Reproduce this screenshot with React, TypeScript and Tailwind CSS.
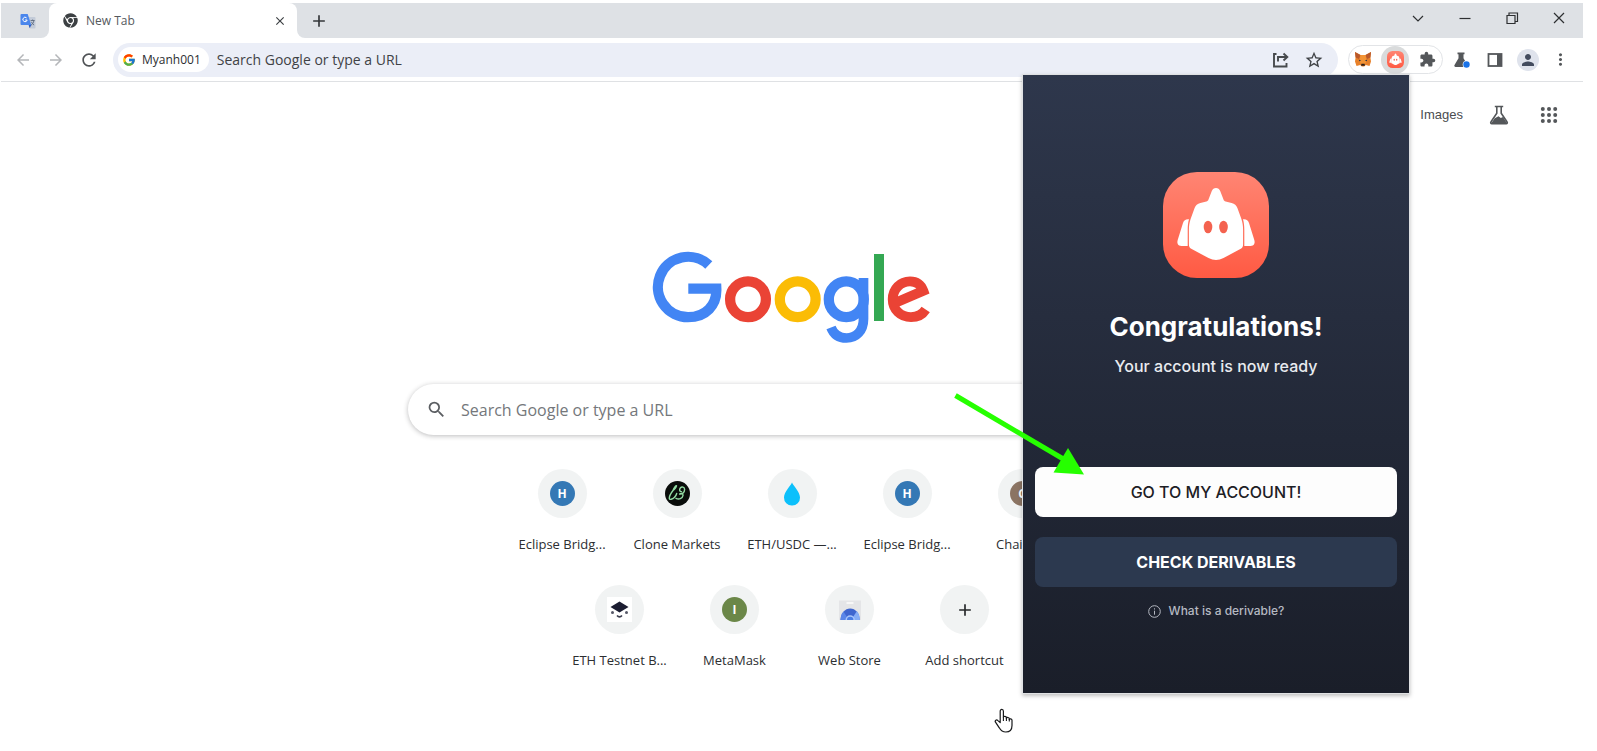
import type { ReactNode } from "react";
import {
  MdArrowBack,
  MdArrowForward,
  MdRefresh,
  MdExtension,
  MdPerson,
  MdMoreVert,
  MdSearch,
  MdStarBorder,
  MdAdd,
  MdClose,
} from "react-icons/md";
import { FcGoogle } from "react-icons/fc";
import { FaChrome } from "react-icons/fa";

function TranslateIcon() {
  return (
    <svg viewBox="0 0 16 16" className="size-4" aria-hidden="true">
      <path d="M7 4h7.500a1 1 0 0 1 1 1v9.500a1 1 0 0 1-1 1H10z" fill="#c3cbd8" />
      <path d="M1.500 1h6.200l3.600 11H1.500a1 1 0 0 1-1-1V2a1 1 0 0 1 1-1z" fill="#4a86ec" />
      <path d="M8.600 12h2.700l-1.600 3.200z" fill="#2f5fc4" />
      <path d="M6.600 4.900A2.200 2.200 0 1 0 7.200 7H5.200" fill="none" stroke="#fff" strokeWidth="1" />
      <path d="M10.600 7.500h4M12.600 6.500v1M11 12.200c1.500-1 2.600-2.600 2.900-4.700M11.400 8.800c.6 1.500 1.500 2.500 2.700 3.300" fill="none" stroke="#5d6b80" strokeWidth="0.9" />
    </svg>
  );
}

function ShareIcon() {
  return (
    <svg viewBox="0 0 18 18" className="size-[18px]" fill="none" stroke="#474a4d" strokeWidth="1.900" aria-hidden="true">
      <path d="M4.500 3H2v12.500h12.500V12" />
      <path d="M6 10.500V6h8.500" />
      <path d="M11.500 2.500L15.300 6l-3.800 3.500" />
    </svg>
  );
}

function FoxIcon() {
  return (
    <svg viewBox="0 0 18 17" className="h-[17px] w-[18px]" aria-hidden="true">
      <path d="M1 1l5.500 3h5L17 1l-.6 5.500.6 4-1.500 4.500-3.700-1-1.600 1.500H7.800L6.200 14l-3.700 1L1 10.500l.6-4z" fill="#e8812a" />
      <path d="M1 1l5.500 3L5 8 1.600 6.500zM17 1l-5.500 3L13 8l3.400-1.500z" fill="#b9582a" />
      <path d="M6.500 4h5l1 6-1.500 3H7l-1.500-3z" fill="#f39435" />
      <path d="M4.800 8.500l2.400 1.200-2 .6zM13.200 8.500l-2.400 1.200 2 .6z" fill="#2b3a4a" />
      <path d="M7.400 12.800h3.200l.3 1.900H7.100z" fill="#2c1f1a" />
    </svg>
  );
}

function MascotIcon({ className, id }: { className: string; id: string }) {
  return (
    <svg viewBox="0 0 106 106" className={className} aria-hidden="true">
      <defs>
        <linearGradient id={id} x1="0" y1="0" x2="0" y2="1">
          <stop offset="0" stopColor="#ff8573" />
          <stop offset="1" stopColor="#ff5a43" />
        </linearGradient>
      </defs>
      <rect width="106" height="106" rx="34" fill={`url(#${id})`} />
      <path
        d="M53 16c2 0 3.400 1.200 4.200 3l3.400 8.800c.4 1 1 1.400 2 1.600l6 1.600c3 .8 4.800 2.400 5.800 5l4 11c1.200 3.600 1.700 7 1.700 11v14.500c0 2.200-.8 3.400-2.800 4.600L60.500 86c-5 2.500-10 2.500-15 0L28.700 77.100c-2-1.200-2.800-2.400-2.800-4.600V58c0-4 .5-7.400 1.700-11l4-11c1-2.600 2.800-4.200 5.800-5l6-1.600c1-.2 1.600-.6 2-1.600L48.800 19c.8-1.800 2.200-3 4.200-3z"
        fill="#fff"
      />
      <path d="M26 47.300c-3.300-.3-5 .8-6 3.800l-5.300 17c-1 3.500.3 5.800 3.700 5.800h6.300V58c0-4 .3-7.300 1.300-10.700z" fill="#fff" />
      <path d="M80 47.300c3.300-.3 5 .8 6 3.800l5.300 17c1 3.500-.3 5.800-3.700 5.800h-6.300V58c0-4-.3-7.300-1.300-10.700z" fill="#fff" />
      <ellipse cx="45" cy="55" rx="4.300" ry="6.300" fill="#f4624f" />
      <ellipse cx="60.500" cy="55" rx="4.300" ry="6.300" fill="#f4624f" />
    </svg>
  );
}

function LabsIcon({ className }: { className: string }) {
  return (
    <svg viewBox="0 0 20 20" className={className} aria-hidden="true">
      <path d="M5.800 1.500h8.400M7.800 2v6.200L1.900 17a1 1 0 0 0 .8 1.600h14.600a1 1 0 0 0 .8-1.600l-5.900-8.800V2" fill="none" stroke="#54575a" strokeWidth="1.600" />
      <path d="M5.700 13.200l3.800-2 2.300 1.800 2.200-.9 4 6.100H2.200z" fill="#54575a" />
    </svg>
  );
}

function ExperimentsIcon() {
  return (
    <svg viewBox="0 0 18 18" className="size-[18px]" aria-hidden="true">
      <path d="M4.500 1.500h7v1.700h-1v4l4 6.800a1.300 1.300 0 0 1-1.100 2H2.600a1.300 1.300 0 0 1-1.100-2l4-6.800v-4h-1z" fill="#54575a" />
      <circle cx="13.500" cy="13.500" r="3.800" fill="#fff" />
      <circle cx="13.500" cy="13.500" r="3.200" fill="#1a73e8" />
    </svg>
  );
}

function SidePanelIcon() {
  return (
    <svg viewBox="0 0 16 16" className="size-4" aria-hidden="true">
      <rect x="1.500" y="2" width="13" height="12" fill="none" stroke="#54575a" strokeWidth="1.800" />
      <rect x="10" y="2" width="4.500" height="12" fill="#54575a" />
    </svg>
  );
}

function AppsIcon() {
  return (
    <svg viewBox="0 0 18 18" className="size-[18px]" fill="#54575a" aria-hidden="true">
      {[3, 9, 15].map((y) => [2.8, 9, 15.2].map((x) => <circle key={`${x}-${y}`} cx={x} cy={y} r="2" />))}
    </svg>
  );
}

function GoogleLogo() {
  return (
    <svg viewBox="11 11 282 93" className="h-[93px] w-[282px]" role="img" aria-label="Google" fill="none" strokeWidth="10.300">
      <path d="M68.800 25A30.200 30.200 0 1 0 48 77.200C66 77.200 77 65 76.300 48.700H48.300" stroke="#4285f4" />
      <circle cx="108" cy="59.300" r="17.900" stroke="#ea4335" />
      <circle cx="157.700" cy="59.300" r="17.900" stroke="#fbbc05" />
      <ellipse cx="206.300" cy="59.300" rx="17.500" ry="17.900" stroke="#4285f4" />
      <path d="M223.500 38V79C223.500 91 216 98 206.500 98C199 98 193.500 94 191 87.500" stroke="#4285f4" strokeWidth="9.700" />
      <path d="M239 14V81" stroke="#34a853" strokeWidth="10" />
      <path
        d="M285.700 69.500C282.500 74.500 277.500 77.200 271 77.200C260.500 77.200 252.700 69.500 252.700 59.300C252.700 49 260.500 41.400 270 41.400C276.500 41.400 281 44.600 283.300 50.800L255.500 62.800"
        stroke="#ea4335"
        strokeWidth="9.800"
      />
    </svg>
  );
}

function Letter({ color, children }: { color: string; children: string }) {
  return (
    <span className={`flex size-[25px] items-center justify-center rounded-full text-[12px] leading-none font-bold text-white ${color}`}>
      {children}
    </span>
  );
}

function CloneIcon() {
  return (
    <svg viewBox="0 0 25 25" className="size-[25px]" aria-hidden="true">
      <circle cx="12.500" cy="12.500" r="12.500" fill="#0a0d0b" />
      <path
        d="M8 9.500C6 12 4.200 15.500 4.300 17.700c.2 1.400 3.200.6 5-1.200 1.500-1.500 2.200-3 2.400-4M8 9.500c1.500-1 3.800-4 3.500-4.800-.5-.6-2.500 2-3.500 4.800M11 17.300c2.800 1.500 6.500.4 7-3 .2-2-2-2.300-3.400-1.300M14.600 13c2.600.6 5-1.800 5-4.600 0-2.600-2.800-3.200-4.300-1.400-1.300 1.600-.6 3.800 1.200 3.600"
        fill="none"
        stroke="#93dca4"
        strokeWidth="1.400"
        strokeLinecap="round"
      />
    </svg>
  );
}

function DropIcon() {
  return (
    <svg viewBox="0 0 18 24" className="h-6 w-[18px]" aria-hidden="true">
      <path d="M9 .500c1.500 3.500 8 9.500 8 15A7.800 7.800 0 0 1 9 23.500a7.800 7.800 0 0 1-8-8c0-5.500 6.500-11.500 8-15z" fill="#0cc0fb" />
    </svg>
  );
}

function TestnetIcon() {
  return (
    <svg viewBox="0 0 25 25" className="size-[25px]" aria-hidden="true">
      <rect width="25" height="25" fill="#fff" />
      <path d="M12.500 4.500l9 5.500-9 5.500-9-5.500z" fill="#1b1d31" />
      <circle cx="5.500" cy="15.500" r="1.500" fill="#555766" />
      <circle cx="19.500" cy="15.500" r="1.500" fill="#555766" />
      <path d="M10 18.500c1.500 1.800 3.500 1.800 5 0" fill="none" stroke="#3b3d4d" strokeWidth="1.600" />
    </svg>
  );
}

function WebStoreIcon() {
  return (
    <svg viewBox="0 0 24 24" className="size-6" aria-hidden="true">
      <path d="M1 2.500h22V22H1z" fill="#e4e5e7" />
      <path d="M8.500 4h7v2h-7z" fill="#f7f7f7" />
      <path d="M2.500 22a9.700 11.500 0 0 1 19.400 0z" fill="#3f66cf" />
      <path d="M2.500 22a9.700 11.500 0 0 1 3-8.500L9 19v3z" fill="#5a86e8" />
      <path d="M15 22v-3l3.800-5.700A9.700 11.500 0 0 1 21.900 22z" fill="#86adf6" />
      <path d="M7.500 22a4.700 4.700 0 0 1 9.400 0z" fill="#a9c6fb" />
      <path d="M9 22a3.200 3.200 0 0 1 6.400 0z" fill="#4a7de4" />
    </svg>
  );
}

function Tile({ label, children }: { label: string; children: ReactNode }) {
  return (
    <a href="#" className="flex h-[116px] w-[115px] flex-col items-center">
      <span className="flex size-[49px] items-center justify-center rounded-full bg-[#f1f3f3]">{children}</span>
      <span className="mt-[18px] text-[13px] leading-4 whitespace-nowrap text-[#2c2e31]">{label}</span>
    </a>
  );
}

function ToolButton({ label, children }: { label: string; children: ReactNode }) {
  return (
    <button aria-label={label} className="flex h-[29px] w-[33px] items-center justify-center text-[#54575a]">
      {children}
    </button>
  );
}

function TabStrip() {
  return (
    <div className="flex h-[35px] items-stretch bg-[#dee1e5]">
      <div className="bg-white">
        <button aria-label="Google Translate" className="flex h-full w-12 items-center justify-center rounded-br-lg bg-[#dee1e5] pl-1.5">
          <TranslateIcon />
        </button>
      </div>
      <div className="flex w-[248px] items-center rounded-t-lg bg-white pr-2.5 pl-3.5">
        <FaChrome className="size-[15px] text-[#3c4043]" />
        <span className="ml-2 flex-1 text-[12px] text-[#55595d]">New Tab</span>
        <button aria-label="Close tab">
          <MdClose className="size-[14px] text-[#3c4043]" />
        </button>
      </div>
      <div className="flex flex-1 bg-white">
        <div className="flex flex-1 items-center rounded-bl-lg bg-[#dee1e5] pl-3">
          <button aria-label="New tab">
            <MdAdd className="size-5 text-[#34373a]" />
          </button>
          <div className="ml-auto flex h-full pr-px pb-1.5">
            {[
              ["Search tabs", "M1 4l5 5 5-5"],
              ["Minimize", "M0.500 6.500h11"],
              ["Restore", "M1 3.500h8v8H1zM3 3V1h8.500v8.500H9.500"],
              ["Close", "M1 1l10 10M11 1L1 11"],
            ].map(([name, d]) => (
              <button key={name} aria-label={name} className="flex w-[47px] items-center justify-center">
                <svg viewBox="0 0 12 12" className="size-3 overflow-visible" fill="none" stroke="#2d2f31" strokeWidth="1.200">
                  <path d={d} />
                </svg>
              </button>
            ))}
          </div>
        </div>
      </div>
    </div>
  );
}

function Toolbar() {
  return (
    <div className="flex h-11 items-center border-b border-[#dfe1e4] pr-1.5 pl-[5px]">
      <button aria-label="Back" className="flex w-[33px] justify-center text-[#b4b6b9]">
        <MdArrowBack className="size-[18px]" />
      </button>
      <button aria-label="Forward" className="flex w-[33px] justify-center text-[#b4b6b9]">
        <MdArrowForward className="size-[18px]" />
      </button>
      <button aria-label="Reload" className="flex w-[33px] justify-center text-[#505356]">
        <MdRefresh className="size-5" />
      </button>
      <div className="ml-2 flex h-[34px] flex-1 items-center rounded-full bg-[#ebeef7] pl-[5px]">
        <div className="flex h-[25px] items-center gap-1.5 rounded-full bg-white pr-2 pl-1">
          <FcGoogle className="size-[14px]" />
          <span className="text-[12px] font-medium text-[#2c2e31]">Myanh001</span>
        </div>
        <input
          aria-label="Address and search bar"
          placeholder="Search Google or type a URL"
          className="ml-2 min-w-0 flex-1 bg-transparent text-[14px] outline-none placeholder:text-[#3f4246]"
        />
        <ToolButton label="Share">
          <ShareIcon />
        </ToolButton>
        <ToolButton label="Bookmark this tab">
          <MdStarBorder className="size-5 text-[#3f4246]" />
        </ToolButton>
        <div className="w-2" />
      </div>
      <div className="ml-2.5 flex h-[29px] items-center rounded-full border border-[#e2e4e7]">
        <button aria-label="MetaMask" className="flex w-7 justify-center">
          <FoxIcon />
        </button>
        <button aria-label="Wallet" className="ml-1 flex size-7 items-center justify-center rounded-full bg-[#d9dbdc]">
          <MascotIcon className="size-[17px]" id="mascot-small" />
        </button>
        <button aria-label="Extensions" className="flex w-[33px] justify-center pl-1">
          <MdExtension className="size-[17px] text-[#54575a]" />
        </button>
      </div>
      <div className="ml-0.5 flex">
        <ToolButton label="Experiments">
          <ExperimentsIcon />
        </ToolButton>
        <ToolButton label="Side panel">
          <SidePanelIcon />
        </ToolButton>
        <ToolButton label="Profile">
          <span className="flex size-[22px] items-center justify-center rounded-full bg-[#dfe3ec]">
            <MdPerson className="size-[18px] text-[#434c5e]" />
          </span>
        </ToolButton>
        <ToolButton label="Menu">
          <MdMoreVert className="size-[19px]" />
        </ToolButton>
      </div>
    </div>
  );
}

function NewTabPage() {
  return (
    <main className="flex flex-col items-center">
      <header className="flex h-[66px] w-full items-center justify-end pr-[25px]">
        <a href="#" className="font-['Liberation_Sans',sans-serif] text-[13px] text-[#4a4d50]">
          Images
        </a>
        <button aria-label="Labs" className="ml-[26px]">
          <LabsIcon className="size-5" />
        </button>
        <button aria-label="Google apps" className="ml-[31px]">
          <AppsIcon />
        </button>
      </header>
      <div className="mt-[103px]">
        <GoogleLogo />
      </div>
      <div className="mt-10 flex h-[51px] w-full max-w-[768px] items-center rounded-full bg-white pl-[18px] shadow-[0_1px_5px_rgba(32,33,36,0.3)]">
        <MdSearch className="size-[21px] text-[#5b5e62]" />
        <input
          aria-label="Search"
          placeholder="Search Google or type a URL"
          className="ml-3.5 min-w-0 flex-1 bg-transparent text-[16px] outline-none placeholder:text-[#74777b]"
        />
      </div>
      <nav aria-label="Shortcuts" className="mt-[34px] flex w-[575px] flex-wrap justify-center">
        <Tile label="Eclipse Bridg...">
          <Letter color="bg-[#3478b5]">H</Letter>
        </Tile>
        <Tile label="Clone Markets">
          <CloneIcon />
        </Tile>
        <Tile label="ETH/USDC —...">
          <DropIcon />
        </Tile>
        <Tile label="Eclipse Bridg...">
          <Letter color="bg-[#3478b5]">H</Letter>
        </Tile>
        <Tile label="Chainlist">
          <Letter color="bg-[#8b7463]">C</Letter>
        </Tile>
        <Tile label="ETH Testnet B...">
          <TestnetIcon />
        </Tile>
        <Tile label="MetaMask">
          <Letter color="bg-[#6b8748]">I</Letter>
        </Tile>
        <Tile label="Web Store">
          <WebStoreIcon />
        </Tile>
        <Tile label="Add shortcut">
          <MdAdd className="size-5 text-[#26282a]" />
        </Tile>
      </nav>
    </main>
  );
}

function WalletPopup() {
  return (
    <section className="absolute top-[74px] right-[187px] w-[388px] border border-[#dfe1e3] bg-linear-to-b from-[#2e374c] to-[#1a1e29] px-3 pt-[97px] pb-[72px] text-center font-['Inter',sans-serif] text-white shadow-[0_2px_4px_rgba(0,0,0,0.25)]">
      <MascotIcon className="mx-auto size-[106px]" id="mascot-large" />
      <h1 className="mt-[31px] text-[26px] leading-9 font-bold">Congratulations!</h1>
      <p className="mt-[9px] text-[16px] leading-6 font-medium text-[#e9ebf0]">Your account is now ready</p>
      <button className="mt-[89px] block h-[50px] w-full rounded-lg bg-[#fdfdfd] text-[16px] font-medium text-[#1d2025]">
        GO TO MY ACCOUNT!
      </button>
      <button className="mt-5 block h-[50px] w-full rounded-lg bg-[#2c394f] text-[16px] font-bold text-white">
        CHECK DERIVABLES
      </button>
      <a href="#" className="mt-3.5 flex items-center justify-center gap-2 text-[12px] leading-5 font-medium text-[#b5b9c2]">
        <svg viewBox="0 0 13 13" className="size-[13px]" fill="none" stroke="currentColor" aria-hidden="true">
          <circle cx="6.500" cy="6.500" r="5.800" />
          <path d="M6.500 5.700v4M6.500 3.300v1.200" />
        </svg>
        What is a derivable?
      </a>
      <svg viewBox="0 0 132 84" className="absolute top-[316px] -left-[70px] h-[84px] w-[132px]" aria-hidden="true">
        <path d="M2.500 4.500L112 69" stroke="#26ff00" strokeWidth="5" />
        <path d="M131 83.500L115 57l-14.500 24.500z" fill="#26ff00" />
      </svg>
    </section>
  );
}

function HandCursor() {
  return (
    <svg viewBox="0 0 20 25" className="absolute top-[708px] right-[583px] h-[25px] w-5" aria-hidden="true">
      <path
        d="M6.200 14.500V3.300c0-2.600 3.200-2.600 3.200 0v6.200c0-1.700 3-1.600 3 .2v.7c.3-1.400 2.900-1.200 2.900.5v.6c.4-1.100 2.700-.8 2.700.8v5.200c0 4-2.500 6.500-6.200 6.500-3.500 0-5-1.500-6.500-4.200l-3.800-5.600c-1-1.800 1-3 2.400-1.600z"
        fill="#fff"
        stroke="#17181a"
        strokeWidth="1.200"
        strokeLinejoin="round"
      />
      <path d="M9.400 9.500v3.500M12.400 10v3M15.300 11v2.500" stroke="#17181a" strokeWidth="1.100" />
    </svg>
  );
}

export default function App() {
  return (
    <div className="relative min-h-screen bg-white pt-[3px] pr-3.5 pl-px font-['Open_Sans','Noto_Sans',sans-serif]">
      <TabStrip />
      <Toolbar />
      <NewTabPage />
      <WalletPopup />
      <HandCursor />
    </div>
  );
}
